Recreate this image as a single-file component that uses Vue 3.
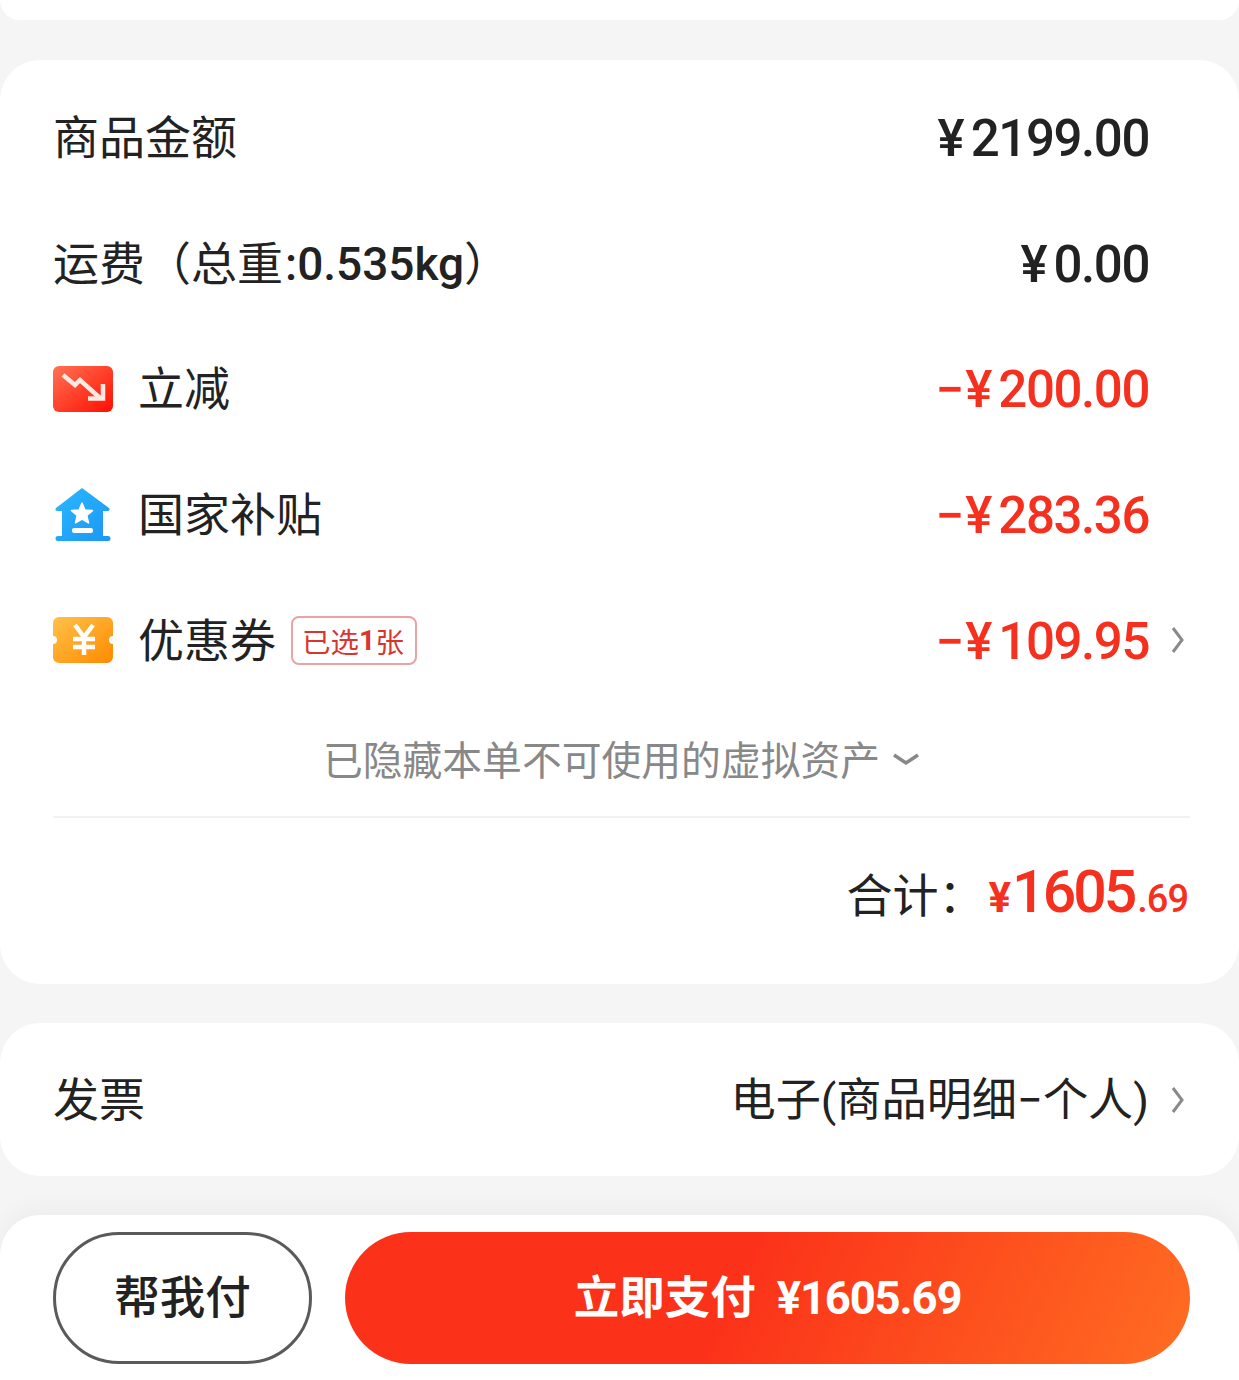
<template>
  <div class="page">
    <div class="card stub"></div>

    <div class="card summary">
      <div class="row" v-for="r in rows" :key="r.label">
        <div class="row-left">
          <svg v-if="r.icon==='down'" class="ico" width="60" height="46" viewBox="0 0 60 46">
            <defs><linearGradient id="gd" x1="0" y1="0" x2="1" y2="1"><stop offset="0" stop-color="#ff7355"/><stop offset="1" stop-color="#ff0e00"/></linearGradient></defs>
            <rect width="60" height="46" rx="6" fill="url(#gd)"/>
            <path d="M10 9l12 10 5-5 20 18" fill="none" stroke="#ffe9e2" stroke-width="4.500"/>
            <path d="M35 32.500h15V18" fill="none" stroke="#ffe9e2" stroke-width="4.500"/>
          </svg>
          <svg v-else-if="r.icon==='house'" class="ico" width="60" height="54" viewBox="0 0 60 54">
            <defs><linearGradient id="gh" x1="0" y1="0" x2="1" y2="1"><stop offset="0" stop-color="#2bb8ff"/><stop offset="1" stop-color="#1b96f5"/></linearGradient></defs>
            <path d="M29 0L56 20q1.500 2.500-1 3h-5V48h5a2.500 2.500 0 0 1 0 5H5a2.500 2.500 0 0 1 0-5h4V23H4q-2.500-.5-1-3z" fill="url(#gh)"/>
            <path d="M29 15l2.900 7 7.600.6-5.700 4.900 1.700 7.400-6.500-3.900-6.500 3.900 1.700-7.400-5.700-4.900 7.600-.6z" fill="#fff" stroke="#fff" stroke-width="1.500" stroke-linejoin="round"/>
            <rect x="19" y="40" width="21" height="5" rx="2" fill="#fff"/>
          </svg>
          <svg v-else-if="r.icon==='ticket'" class="ico" width="60" height="46" viewBox="0 0 60 46">
            <defs><linearGradient id="gt" x1="0" y1="0" x2="1" y2="1"><stop offset="0" stop-color="#ffc14a"/><stop offset="1" stop-color="#ff8a00"/></linearGradient></defs>
            <path d="M6 0h48a6 6 0 0 1 6 6v13a4 4 0 0 0 0 8v13a6 6 0 0 1-6 6H6a6 6 0 0 1-6-6V27a4 4 0 0 0 0-8V6a6 6 0 0 1 6-6z" fill="url(#gt)"/>
            <path d="M22 8l9 12 9-12M31 20v18M20 22h22M20 30h22" fill="none" stroke="#fff" stroke-width="4.500"/>
          </svg>
          <span class="label" :class="{'with-ico':r.icon}">{{ r.label }}<b v-if="r.extra">{{ r.extra }}</b>{{ r.tail }}</span>
          <span v-if="r.tag" class="tag">已选<b>1</b>张</span>
        </div>
        <span class="amount" :class="{red:r.sign}"><span v-if="r.sign" class="sign">{{ r.sign }}</span><span class="yen">¥</span>{{ r.amount }}</span>
        <span class="slot">
          <svg v-if="r.arrow" width="14" height="28" viewBox="0 0 14 28"><path d="M3 2l9 12-9 12" fill="none" stroke="#8a8a8a" stroke-width="3"/></svg>
        </span>
      </div>

      <div class="hidden-tip">
        已隐藏本单不可使用的虚拟资产
        <svg class="tip-arrow" width="28" height="13" viewBox="0 0 28 13"><path d="M2 2l12 8 12-8" fill="none" stroke="#888" stroke-width="3.500"/></svg>
      </div>

      <div class="total">
        <span class="total-label">合计：</span>
        <span class="total-price"><i class="cur">¥</i><em>1605</em><i>.69</i></span>
      </div>
    </div>

    <div class="card invoice">
      <span class="label">发票</span>
      <span class="invoice-val">电子(商品明细−个人)</span>
      <span class="slot">
        <svg width="14" height="28" viewBox="0 0 14 28"><path d="M3 2l9 12-9 12" fill="none" stroke="#8a8a8a" stroke-width="3"/></svg>
      </span>
    </div>

    <div class="bar">
      <button class="btn-help">帮我付</button>
      <button class="btn-pay">立即支付<span class="pay-num">¥1605.69</span></button>
    </div>
  </div>
</template>

<script setup>
const rows = [
  { label: '商品金额', amount: '2199.00' },
  { label: '运费（总重', extra: ':0.535kg', tail: '）', amount: '0.00' },
  { label: '立减', icon: 'down', sign: '−', amount: '200.00' },
  { label: '国家补贴', icon: 'house', sign: '−', amount: '283.36' },
  { label: '优惠券', icon: 'ticket', tag: true, sign: '−', amount: '109.95', arrow: true },
]
</script>

<style>
html,body{margin:0;background:#f5f5f5}
</style>

<style scoped>
.page{height:1380px;overflow:hidden;display:flex;flex-direction:column;font-family:Roboto,"Noto Sans CJK SC",sans-serif;color:#222}
.card{background:#fff;border-radius:40px}
.stub{height:20px;border-radius:0 0 36px 36px;margin-bottom:40px}

.summary{height:924px;box-sizing:border-box;padding:15px 49px 0 53px;margin-bottom:39px}
.row{display:flex;align-items:center;height:125.6px}
.row-left{flex:1;display:flex;align-items:center;min-width:0}
.ico{flex-shrink:0}
.label{font-size:46px;font-weight:400;white-space:nowrap;margin-top:-7px}
.label b{font-weight:500;margin-left:2px}
.label.with-ico{margin-left:25px}
.tag{margin-left:15px;height:49px;width:126px;box-sizing:border-box;border:2px solid #e9a3a3;border-radius:8px;color:#d8352e;font-size:28.500px;padding-right:2px;display:flex;align-items:center;justify-content:center;white-space:nowrap}
.tag b{font-weight:700}
.amount{font-size:51px;font-weight:500;letter-spacing:-1.400px;white-space:nowrap;margin-top:2px}
.amount.red{color:#f5301f}
.sign{letter-spacing:1px}
.yen{letter-spacing:6px}
.slot{width:41px;box-sizing:border-box;padding-right:6px;flex-shrink:0;display:flex;justify-content:flex-end;align-items:center}

.hidden-tip{height:115px;padding-bottom:4px;border-bottom:2px solid #f2f2f2;box-sizing:border-box;display:flex;align-items:center;justify-content:center;gap:12px;color:#888;font-size:39.800px}
.tip-arrow{margin-top:4px}

.total{display:flex;align-items:center;justify-content:flex-end;height:148px;padding-right:2px}
.total-label{font-size:46px;margin-right:4px}
.total-price{color:#f5301f;font-weight:500;white-space:nowrap}
.total-price i{font-style:normal;font-size:38px;letter-spacing:-1px}
.total-price .cur{font-size:42px;font-weight:700;letter-spacing:0}
.total-price em{font-style:normal;font-size:59px;letter-spacing:-3px;margin:0 3px 0 1px}

.invoice{height:153px;box-sizing:border-box;padding:0 49px 0 53px;display:flex;align-items:center;margin-bottom:39px}
.invoice .label{flex:1}
.invoice-val{font-size:45.200px;font-weight:400;white-space:nowrap;margin-top:-7px}

.bar{height:165px;box-sizing:border-box;background:#fff;border-radius:40px 40px 0 0;box-shadow:0 -6px 24px rgba(0,0,0,.04);padding:17px 49px 16px 53px;display:flex;gap:33px}
.bar button{font-family:inherit;border-radius:66px;cursor:pointer;height:132px;font-size:45.500px;padding:0 0 9px}
.btn-help{width:259px;flex-shrink:0;background:#fff;border:3px solid #5a5a5a;color:#222;font-weight:500}
.btn-pay{flex:1;border:0;color:#fff;font-weight:700;background:linear-gradient(115deg,#fb3119 0%,#fb3119 45%,#ff6d22 100%)}
.pay-num{letter-spacing:-1.200px;margin-left:21px}
</style>
